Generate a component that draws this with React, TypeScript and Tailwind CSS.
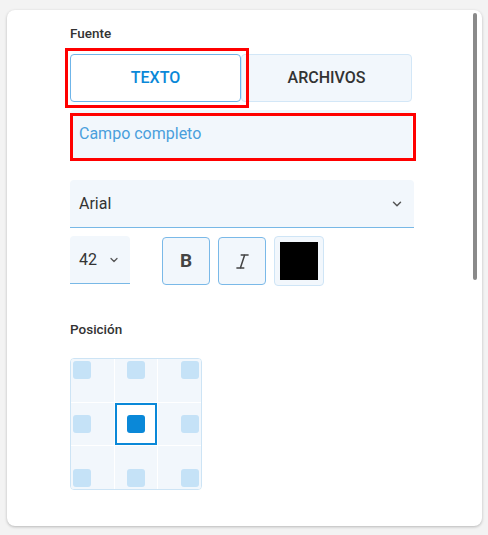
import React, { useState } from 'react';
import { ChevronDown } from 'lucide-react';

const POSITIONS = [
  'items-start justify-start',
  'items-start justify-center',
  'items-start justify-end',
  'items-center justify-start',
  'items-center justify-center',
  'items-center justify-end',
  'items-end justify-start',
  'items-end justify-center',
  'items-end justify-end',
];

function ItalicIcon() {
  return (
    <svg width="13" height="15" viewBox="0 0 12 14" fill="none" stroke="#444" strokeWidth="1.4" strokeLinecap="square">
      <path d="M5 1h6M1 13h6M8 1L4 13" />
    </svg>
  );
}

export default function App() {
  const [tab, setTab] = useState<'texto' | 'archivos'>('texto');
  const [pos, setPos] = useState(4);

  return (
    <div className="min-h-[535px] bg-[#f3f3f3] pt-[10px] pl-[7px]" style={{ fontFamily: 'Roboto, "Liberation Sans", sans-serif' }}>
      <div className="relative w-[475px] h-[516px] bg-white rounded-lg shadow-[0_1px_3px_rgba(0,0,0,0.25)]">
        <div className="absolute right-[5px] top-[3px] w-[4px] h-[267px] rounded-full bg-[#8a8a8a]" />

        <div className="pl-[63px] pt-[15px] w-[407px]">
          <div className="text-[13.5px] font-medium text-[#333] leading-4">Fuente</div>

          {/* source tabs */}
          <div className="relative mt-[13px] flex w-[342px] h-12">
            <button
              onClick={() => setTab('texto')}
              className={`flex-1 rounded border-[1.5px] text-[16px] font-medium ${tab === 'texto' ? 'bg-white border-[#6fb5e9] text-[#0a88d8]' : 'bg-[#f2f7fc] border-[#d3e7f7] text-[#333]'}`}
            >
              TEXTO
            </button>
            <button
              onClick={() => setTab('archivos')}
              className={`flex-1 rounded border text-[16px] font-medium ${tab === 'archivos' ? 'bg-white border-[#6fb5e9] text-[#0a88d8]' : 'bg-[#f2f7fc] border-[#d3e7f7] text-[#333]'}`}
            >
              ARCHIVOS
            </button>
            <div className="absolute left-[-5px] top-[-6px] w-[184px] h-[60px] border-[3px] border-[#ff0000] pointer-events-none" />
          </div>

          {/* text field */}
          <div className="relative mt-2 h-12 w-[342px] bg-[#f2f7fc] rounded-t flex items-center px-[9px]">
            <span className="text-[16px] text-[#4a9fdc]">Campo completo</span>
            <div className="absolute left-0 top-[3px] w-[346px] h-[48px] border-[3px] border-[#ff0000] pointer-events-none" />
          </div>

          {/* font family */}
          <div className="mt-[22px] h-12 w-[344px] bg-[#f2f7fc] rounded-t border-b border-[#78b8e6] flex items-center justify-between pl-[9px] pr-[10px]">
            <span className="text-[16px] text-[#333]">Arial</span>
            <ChevronDown size={14} strokeWidth={2.5} color="#555" />
          </div>

          {/* size + style */}
          <div className="mt-2 flex items-start">
            <div className="w-[60px] h-12 bg-[#f2f7fc] rounded-t border-b border-[#78b8e6] flex items-center pl-[9px] gap-[11px]">
              <span className="text-[16px] text-[#333]">42</span>
              <ChevronDown size={12} strokeWidth={2.5} color="#555" />
            </div>
            <button className="ml-8 mt-px w-12 h-12 rounded border border-[#7ab9e8] bg-[#f2f7fc] flex items-center justify-center text-[19px] font-bold text-[#444]">
              B
            </button>
            <button className="ml-2 mt-px w-12 h-12 rounded border border-[#7ab9e8] bg-[#f2f7fc] flex items-center justify-center">
              <ItalicIcon />
            </button>
            <button className="ml-2 w-[50px] h-[50px] rounded border border-[#cfe5f6] bg-[#f2f7fc] p-[5px]">
              <div className="w-full h-full bg-black" />
            </button>
          </div>

          <div className="mt-[35px] text-[13.5px] font-medium text-[#333] leading-4">Posición</div>

          {/* position grid */}
          <div className="mt-[21px] w-[132px] h-[132px] rounded border border-[#cde4f5] bg-white overflow-hidden grid grid-cols-3 grid-rows-3 gap-px">
            {POSITIONS.map((cls, i) => (
              <button
                key={i}
                onClick={() => setPos(i)}
                className={`flex min-h-0 p-[2px] ${cls} ${pos === i ? 'bg-white border-2 border-[#0a88d8] !p-[9px]' : 'bg-[#f2f7fc]'}`}
              >
                <div className={`w-[18px] h-[18px] rounded-[3px] ${pos === i ? 'bg-[#0a88d8]' : 'bg-[#c5e2f7]'}`} />
              </button>
            ))}
          </div>
        </div>
      </div>
    </div>
  );
}
